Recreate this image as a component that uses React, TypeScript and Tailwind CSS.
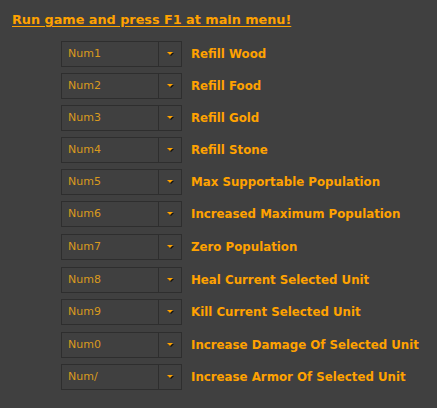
const rows = [
  ["Num1", "Refill Wood", "mt-0"],
  ["Num2", "Refill Food", "mt-[6px]"],
  ["Num3", "Refill Gold", "mt-[6px]"],
  ["Num4", "Refill Stone", "mt-[6px]"],
  ["Num5", "Max Supportable Population", "mt-[6px]"],
  ["Num6", "Increased Maximum Population", "mt-[6px]"],
  ["Num7", "Zero Population", "mt-[7px]"],
  ["Num8", "Heal Current Selected Unit", "mt-[7px]"],
  ["Num9", "Kill Current Selected Unit", "mt-[6px]"],
  ["Num0", "Increase Damage Of Selected Unit", "mt-[7px]"],
  ["Num/", "Increase Armor Of Selected Unit", "mt-[6px]"],
];

function Arrow() {
  return (
    <svg width="7" height="5" viewBox="0 0 7 5" className="block">
      <polygon points="1,1 7,1 4,4" fill="#111" />
      <polygon points="0,0 6,0 3,3" fill="#ffa200" />
    </svg>
  );
}

export default function App() {
  return (
    <div className="h-[408px] w-[437px] bg-[#404040] font-['DejaVu_Sans',Verdana,sans-serif]">
      <div className="px-3 pt-[12px]">
        <p className="text-[12.8px] font-bold leading-[16px] text-[#ffa200] underline underline-offset-2">
          Run game and press F1 at main menu!
        </p>
      </div>
      <div className="mt-[13px] flex flex-col pl-[61px]">
        {rows.map(([key, label, gap]) => (
          <div key={key} className={`flex items-center ${gap}`}>
            <div className="flex h-[26px] w-[121px] border border-[#2e2e2e]">
              <div className="flex flex-1 items-center pl-[6px] text-[11px] text-[#d99a1e]">{key}</div>
              <div className="flex w-[23px] items-center justify-center border-l border-[#2e2e2e]">
                <Arrow />
              </div>
            </div>
            <span className="ml-[9px] pt-[1px] text-[11.8px] font-bold text-[#ffa200]">{label}</span>
          </div>
        ))}
      </div>
    </div>
  );
}
